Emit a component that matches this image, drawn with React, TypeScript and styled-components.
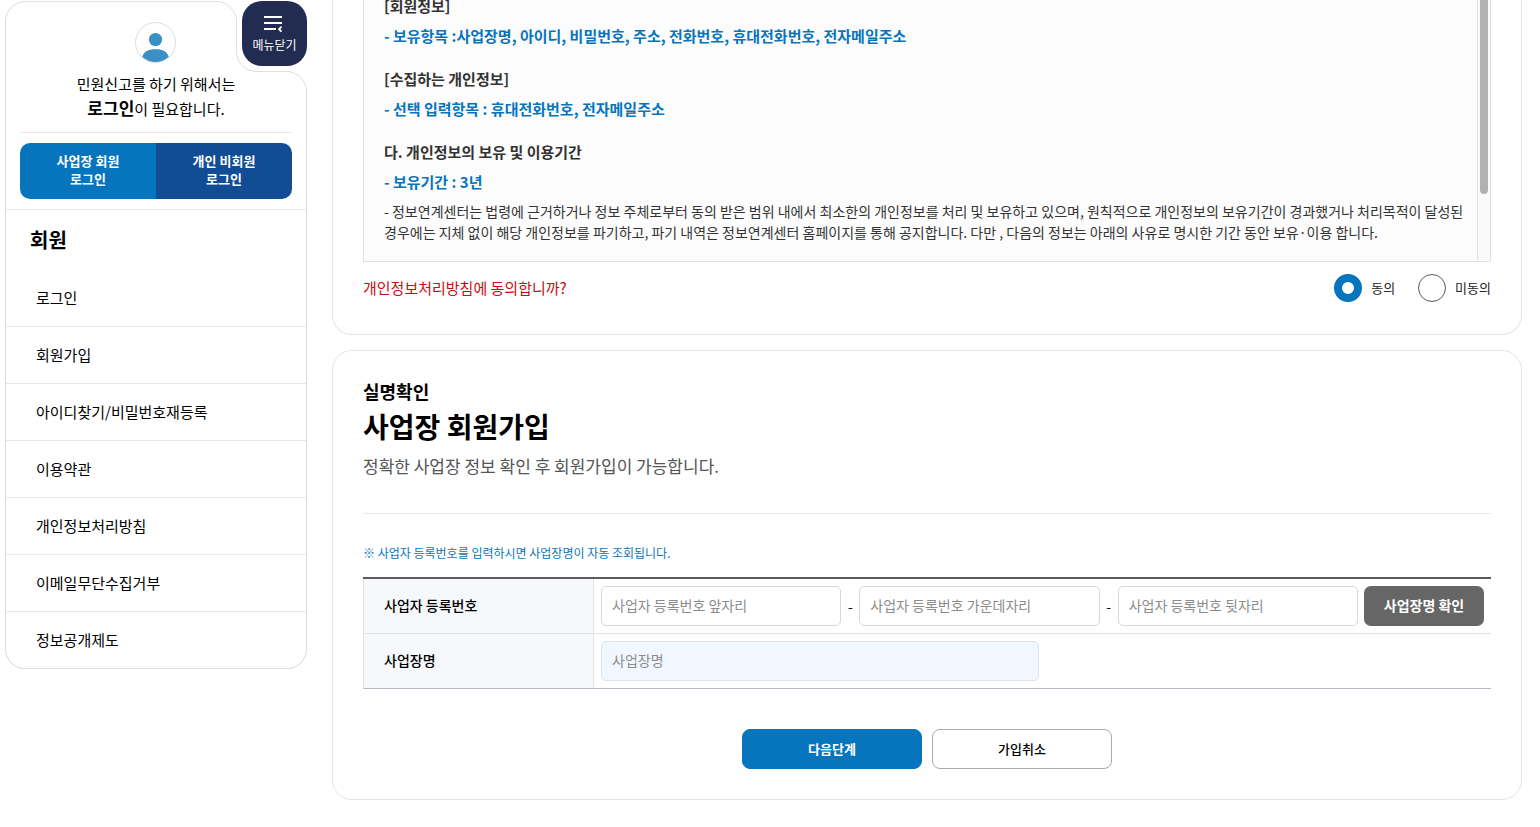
import React, { useState } from "react";
import styled, { createGlobalStyle } from "styled-components";

const GlobalStyle = createGlobalStyle`
  *, *::before, *::after { box-sizing: border-box; }
  body {
    margin: 0;
    background: #fff;
    color: #000;
    font-family: "Noto Sans CJK KR", "Noto Sans", sans-serif;
    font-size: 15px;
    line-height: 24px;
    word-break: keep-all;
  }
  h1, h2, h3, p, ul { margin: 0; padding: 0; }
  ul { list-style: none; }
  a { color: inherit; text-decoration: none; }
  button, input { font-family: inherit; }
  button { cursor: pointer; }
`;

const Page = styled.div`
  display: flex;
  align-items: flex-start;
  gap: 25px;
  padding: 0 18px 27px 5px;
`;

/* ---------- sidebar ---------- */

const Sidebar = styled.aside`
  position: relative;
  flex: none;
  width: 302px;
  padding-top: 1px;
`;

const Outline = styled.svg`
  position: absolute;
  top: 1px;
  left: 0;
  pointer-events: none;
`;

const MenuToggle = styled.button`
  position: absolute;
  top: 1px;
  right: 0;
  display: flex;
  flex-direction: column;
  align-items: center;
  width: 65px;
  height: 65px;
  padding: 14px 0 0;
  border: 0;
  border-radius: 20px;
  background: #212c50;
  color: #fff;
  font-size: 12px;
  line-height: 24px;
`;

const LoginArea = styled.div`
  display: flex;
  flex-direction: column;
  align-items: center;
  padding: 21px 15px 10px;
`;

const LoginText = styled.p`
  align-self: stretch;
  margin-top: 9px;
  padding-bottom: 11px;
  border-bottom: 1px solid #e8e8e8;
  text-align: center;
  strong { font-size: 17px; }
`;

const LoginButtons = styled.div`
  display: flex;
  align-self: stretch;
  margin-top: 10px;
  border-radius: 10px;
  overflow: hidden;
`;

const LoginLink = styled.a<{ $color: string }>`
  flex: 1;
  padding: 9px 0 11px;
  background: ${(p) => p.$color};
  color: #fff;
  font-size: 13px;
  font-weight: 700;
  line-height: 18px;
  text-align: center;
`;

const SidePanel = styled.nav`
  border: 1px solid #ddd;
  border-top-color: #e8e8e8;
  border-radius: 0 0 20px 20px;
`;

const SideTitle = styled.h2`
  padding: 18px 24px;
  font-size: 20px;
  line-height: 24px;
`;

const SideItem = styled.li`
  & + & { border-top: 1px solid #e8e8e8; }
  a {
    display: block;
    padding: 16px 30px;
  }
`;

/* ---------- main column ---------- */

const Main = styled.main`
  flex: 1;
  min-width: 0;
  display: flex;
  flex-direction: column;
  gap: 15px;
`;

const Card = styled.section<{ $continued?: boolean }>`
  padding: ${(p) => (p.$continued ? "0 30px 32px" : "29px 30px 30px")};
  border: 1px solid #e5e5e5;
  border-top-width: ${(p) => (p.$continued ? 0 : 1)}px;
  border-radius: ${(p) => (p.$continued ? "0 0 20px 20px" : "20px")};
`;

const TermsBox = styled.div`
  display: flex;
  border: 1px solid #e2e2e2;
  border-top: 0;
  background: #fcfcfc;
  overflow: hidden;
`;

const TermsBody = styled.div`
  flex: 1;
  margin-top: -6px;
  padding: 0 10px 18px 20px;
  color: #333;
`;

const TermsTitle = styled.h3`
  font-size: 15px;
  line-height: 24px;
`;

const TermsPoint = styled.p`
  margin: 6px 0 19px;
  color: #0675bd;
  font-weight: 700;
`;

const TermsText = styled.p`
  margin-top: -12px;
  font-size: 14px;
  line-height: 21px;
`;

const ScrollTrack = styled.div`
  flex: none;
  width: 13px;
  padding: 0 2px;
  border-left: 1px solid #e2e2e2;
  background: #f9f9f9;
`;

const ScrollThumb = styled.div`
  width: 8px;
  height: 194px;
  border-radius: 0 0 4px 4px;
  background: #b0b1b3;
`;

const ConsentRow = styled.fieldset`
  display: flex;
  align-items: center;
  justify-content: space-between;
  margin: 0;
  padding: 12px 0 0;
  border: 0;
`;

const Question = styled.span`
  color: #cb0b10;
`;

const Choices = styled.div`
  display: flex;
  gap: 23px;
`;

const Choice = styled.label`
  display: flex;
  align-items: center;
  gap: 9px;
  color: #222;
  font-size: 13px;
  line-height: 28px;
  input {
    appearance: none;
    width: 28px;
    height: 28px;
    margin: 0;
    border: 1px solid #555;
    border-radius: 50%;
    background: #fff;
  }
  input:checked { border: 8px solid #0675bd; }
`;

const CardKicker = styled.p`
  font-size: 18px;
  font-weight: 700;
  line-height: 22px;
`;

const CardTitle = styled.h1`
  margin-top: 4px;
  font-size: 28px;
  line-height: 40px;
`;

const CardDesc = styled.p`
  margin-top: 8px;
  padding-bottom: 35px;
  border-bottom: 1px solid #e8e8e8;
  color: #555;
  font-size: 17px;
`;

const Notice = styled.p`
  margin: 27px 0 12px;
  color: #0675bd;
  font-size: 12px;
`;

const FormTable = styled.table`
  width: 100%;
  border-collapse: separate;
  border-spacing: 0;
  border-top: 2px solid #5c5c5c;
  th {
    width: 231px;
    padding: 0 20px 2px;
    border: solid #e2e2e2;
    border-width: 0 1px 1px;
    background: #f7f8fb;
    font-size: 14px;
    font-weight: 500;
    text-align: left;
  }
  td {
    padding: 7px;
    border-bottom: 1px solid #e2e2e2;
  }
  tr:last-child > * { border-bottom-color: #b5b9c6; }
`;

const FieldLine = styled.div`
  display: flex;
  align-items: center;
`;

const Dash = styled.span`
  flex: none;
  width: 18px;
  font-size: 14px;
  text-align: center;
`;

const TextField = styled.input<{ $half?: boolean }>`
  flex: ${(p) => (p.$half ? "0 1 438px" : "1 1 0")};
  min-width: 0;
  height: 40px;
  padding: 0 10px 2px;
  border: 1px solid #d8d8d8;
  border-radius: 5px;
  background: #fff;
  font-size: 14px;
  &::placeholder { color: #8c8c8c; opacity: 1; }
  &:read-only {
    border-color: #dfe3e8;
    background: #f0f7ff;
  }
`;

const CheckButton = styled.button`
  flex: none;
  width: 120px;
  height: 40px;
  margin-left: 6px;
  padding: 0 0 2px;
  border: 0;
  border-radius: 7px;
  background: #666;
  color: #fff;
  font-size: 14px;
  font-weight: 700;
`;

const Actions = styled.div`
  display: flex;
  justify-content: center;
  gap: 10px;
  margin-top: 40px;
`;

const ActionButton = styled.button<{ $primary?: boolean }>`
  width: 180px;
  height: 40px;
  padding: 0 0 2px;
  border: 1px solid ${(p) => (p.$primary ? "#0675bd" : "#aaa")};
  border-radius: 8px;
  background: ${(p) => (p.$primary ? "#0675bd" : "#fff")};
  color: ${(p) => (p.$primary ? "#fff" : "#000")};
  font-size: 13px;
  font-weight: ${(p) => (p.$primary ? 700 : 500)};
`;

const MENU = [
  "로그인",
  "회원가입",
  "아이디찾기/비밀번호재등록",
  "이용약관",
  "개인정보처리방침",
  "이메일무단수집거부",
  "정보공개제도",
];

function Avatar() {
  return (
    <svg width="42" height="41" viewBox="0 0 42 41" aria-hidden="true">
      <circle cx="20.5" cy="20.5" r="20" fill="#fff" stroke="#ddd" />
      <circle cx="20.5" cy="17.5" r="6.6" fill="#3a8fc6" />
      <path d="M7.2 34.8C9 29.5 13 27.2 20.5 27.2S32 29.5 33.8 34.8C30 38.4 25.6 40 20.5 40S11 38.4 7.2 34.8Z" fill="#3a8fc6" />
    </svg>
  );
}

function MenuCloseIcon() {
  return (
    <svg width="21" height="18" viewBox="0 0 21 18" fill="none" stroke="#fff" strokeWidth="2" aria-hidden="true">
      <path d="M0 2H18M0 8H18M0 14H12" />
      <path d="M17.500 11.700L15 14.200L17.500 16.700" strokeWidth="1.800" />
    </svg>
  );
}

export default function App() {
  const [agree, setAgree] = useState("yes");

  return (
    <>
      <GlobalStyle />
      <Page>
        <Sidebar>
          <Outline width="302" height="208" viewBox="0 0 302 208" fill="none" stroke="#ddd" aria-hidden="true">
            <path d="M.5 208V20.5A20 20 0 0 1 20.5.5H211.500A20 20 0 0 1 231.500 20.500V50.500A20 20 0 0 0 251.500 70.500H281.500A20 20 0 0 1 301.500 90.500V208" />
          </Outline>
          <LoginArea>
            <Avatar />
            <LoginText>
              민원신고를 하기 위해서는
              <br />
              <strong>로그인</strong>이 필요합니다.
            </LoginText>
            <LoginButtons>
              <LoginLink href="#business" $color="#0675bd">
                사업장 회원
                <br />
                로그인
              </LoginLink>
              <LoginLink href="#guest" $color="#114c94">
                개인 비회원
                <br />
                로그인
              </LoginLink>
            </LoginButtons>
          </LoginArea>
          <MenuToggle type="button">
            <MenuCloseIcon />
            메뉴닫기
          </MenuToggle>
          <SidePanel aria-label="회원">
            <SideTitle>회원</SideTitle>
            <ul>
              {MENU.map((label) => (
                <SideItem key={label}>
                  <a href="#menu">{label}</a>
                </SideItem>
              ))}
            </ul>
          </SidePanel>
        </Sidebar>

        <Main>
          <Card $continued>
            <TermsBox>
              <TermsBody>
                <TermsTitle>[회원정보]</TermsTitle>
                <TermsPoint>
                  - 보유항목 :사업장명, 아이디, 비밀번호, 주소, 전화번호, 휴대전화번호, 전자메일주소
                </TermsPoint>
                <TermsTitle>[수집하는 개인정보]</TermsTitle>
                <TermsPoint>- 선택 입력항목 : 휴대전화번호, 전자메일주소</TermsPoint>
                <TermsTitle>다. 개인정보의 보유 및 이용기간</TermsTitle>
                <TermsPoint>- 보유기간 : 3년</TermsPoint>
                <TermsText>
                  - 정보연계센터는 법령에 근거하거나 정보 주체로부터 동의 받은 범위 내에서 최소한의 개인정보를 처리 및
                  보유하고 있으며, 원칙적으로 개인정보의 보유기간이 경과했거나 처리목적이 달성된 경우에는 지체 없이 해당
                  개인정보를 파기하고, 파기 내역은 정보연계센터 홈페이지를 통해 공지합니다. 다만 , 다음의 정보는 아래의
                  사유로 명시한 기간 동안 보유·이용 합니다.
                </TermsText>
              </TermsBody>
              <ScrollTrack>
                <ScrollThumb />
              </ScrollTrack>
            </TermsBox>
            <ConsentRow aria-labelledby="consent-question">
              <Question id="consent-question">개인정보처리방침에 동의합니까?</Question>
              <Choices>
                <Choice>
                  <input type="radio" name="agree" checked={agree === "yes"} onChange={() => setAgree("yes")} />
                  동의
                </Choice>
                <Choice>
                  <input type="radio" name="agree" checked={agree === "no"} onChange={() => setAgree("no")} />
                  미동의
                </Choice>
              </Choices>
            </ConsentRow>
          </Card>

          <Card>
            <CardKicker>실명확인</CardKicker>
            <CardTitle>사업장 회원가입</CardTitle>
            <CardDesc>정확한 사업장 정보 확인 후 회원가입이 가능합니다.</CardDesc>
            <Notice>※ 사업자 등록번호를 입력하시면 사업장명이 자동 조회됩니다.</Notice>
            <FormTable>
              <tbody>
                <tr>
                  <th scope="row">
                    <label htmlFor="reg-1">사업자 등록번호</label>
                  </th>
                  <td>
                    <FieldLine>
                      <TextField id="reg-1" placeholder="사업자 등록번호 앞자리" />
                      <Dash>-</Dash>
                      <TextField aria-label="사업자 등록번호 가운데자리" placeholder="사업자 등록번호 가운데자리" />
                      <Dash>-</Dash>
                      <TextField aria-label="사업자 등록번호 뒷자리" placeholder="사업자 등록번호 뒷자리" />
                      <CheckButton type="button">사업장명 확인</CheckButton>
                    </FieldLine>
                  </td>
                </tr>
                <tr>
                  <th scope="row">
                    <label htmlFor="company">사업장명</label>
                  </th>
                  <td>
                    <FieldLine>
                      <TextField id="company" placeholder="사업장명" readOnly $half />
                    </FieldLine>
                  </td>
                </tr>
              </tbody>
            </FormTable>
            <Actions>
              <ActionButton type="button" $primary>
                다음단계
              </ActionButton>
              <ActionButton type="button">가입취소</ActionButton>
            </Actions>
          </Card>
        </Main>
      </Page>
    </>
  );
}
